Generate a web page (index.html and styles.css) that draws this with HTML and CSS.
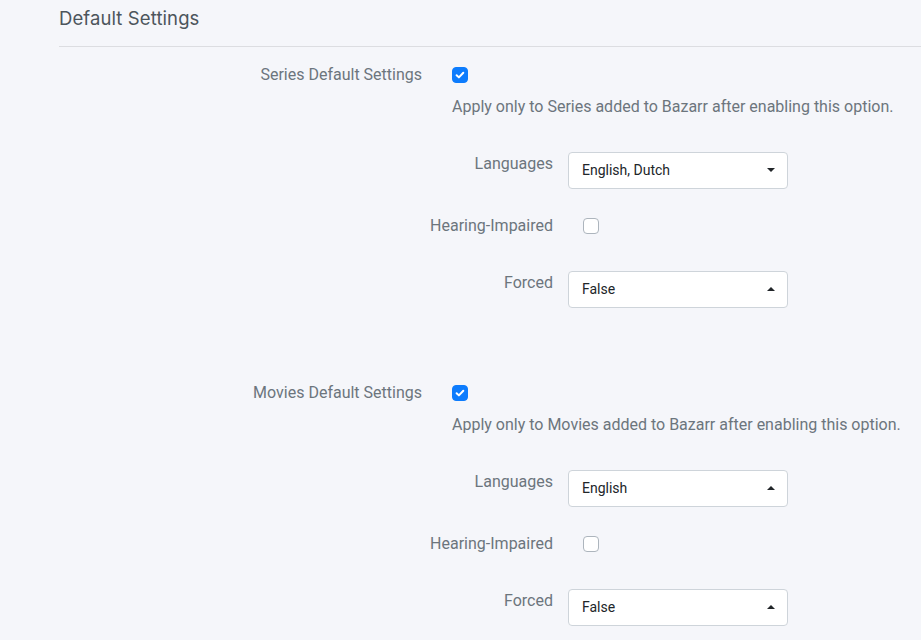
FILE: index.html
```html
<!DOCTYPE html>
<html>
<head>
<meta charset="utf-8">
<link rel="stylesheet" href="styles.css">
</head>
<body>
<div class="page">
  <h1 class="title">Default Settings</h1>
  <div class="rule"></div>

  <section class="group">
    <div class="row top">
      <div class="label main-label">Series Default Settings</div>
      <span class="check checked"><svg viewBox="0 0 16 16" width="16" height="16"><path d="M4.6 8.2l2.3 2.2 4.4-4.6" fill="none" stroke="#fff" stroke-width="2" stroke-linecap="round" stroke-linejoin="round"/></svg></span>
    </div>
    <div class="desc">Apply only to Series added to Bazarr after enabling this option.</div>
    <div class="row sub select-row">
      <div class="label sub-label">Languages</div>
      <div class="select"><span>English, Dutch</span><span class="caret down"></span></div>
    </div>
    <div class="row sub check-row">
      <div class="label sub-label">Hearing-Impaired</div>
      <span class="check sub-check"></span>
    </div>
    <div class="row sub select-row forced">
      <div class="label sub-label">Forced</div>
      <div class="select"><span>False</span><span class="caret up"></span></div>
    </div>
  </section>

  <section class="group second">
    <div class="row top">
      <div class="label main-label">Movies Default Settings</div>
      <span class="check checked"><svg viewBox="0 0 16 16" width="16" height="16"><path d="M4.6 8.2l2.3 2.2 4.4-4.6" fill="none" stroke="#fff" stroke-width="2" stroke-linecap="round" stroke-linejoin="round"/></svg></span>
    </div>
    <div class="desc">Apply only to Movies added to Bazarr after enabling this option.</div>
    <div class="row sub select-row">
      <div class="label sub-label">Languages</div>
      <div class="select"><span>English</span><span class="caret up"></span></div>
    </div>
    <div class="row sub check-row">
      <div class="label sub-label">Hearing-Impaired</div>
      <span class="check sub-check"></span>
    </div>
    <div class="row sub select-row forced">
      <div class="label sub-label">Forced</div>
      <div class="select"><span>False</span><span class="caret up"></span></div>
    </div>
  </section>
</div>
</body>
</html>
```

FILE: styles.css
```css
html, body {
  margin: 0;
  padding: 0;
  background: #f5f6fa;
  font-family: Roboto, "Liberation Sans", sans-serif;
  overflow: hidden;
}

.page {
  padding-left: 59px;
  width: 862px;
}

.title {
  margin: 0;
  height: 36px;
  line-height: 36px;
  font-family: Inter, "Open Sans", sans-serif;
  font-weight: 400;
  font-size: 18.5px;
  color: #4c555c;
  letter-spacing: 0.1px;
}

.rule {
  margin-top: 10px;
  height: 1px;
  background: #dcdde1;
  width: 880px;
}

.group {
  padding-top: 12px;
}

.group.second {
  padding-top: 69px;
}

.row {
  display: flex;
}

.row.top {
  height: 32px;
  align-items: center;
}

.label {
  font-size: 16px;
  line-height: 24px;
  color: #6c757d;
  text-align: right;
  flex: none;
}

.main-label {
  width: 363px;
  margin-right: 30px;
}

.sub-label {
  width: 494px;
  margin-right: 15px;
}

.desc {
  margin-top: 4px;
  margin-left: 393px;
  font-size: 16px;
  line-height: 24px;
  color: #6c757d;
}

.select-row {
  margin-top: 33px;
  align-items: flex-start;
}

.check-row {
  margin-top: 25px;
  height: 24px;
  align-items: center;
}

.check {
  display: block;
  width: 16px;
  height: 16px;
  box-sizing: border-box;
  border-radius: 4px;
  border: 1px solid #adb5bd;
  background: #fff;
  flex: none;
}

.check.checked {
  background: #0d7cfd;
  border-color: #0d7cfd;
}

.check.checked svg {
  display: block;
  margin: -1px;
}

.sub-check {
  margin-left: 15px;
}

.select {
  width: 220px;
  height: 37px;
  box-sizing: border-box;
  border: 1px solid #ced4da;
  border-radius: 4px;
  background: #fff;
  display: flex;
  align-items: center;
  justify-content: space-between;
  padding: 0 12px 2px 13px;
  font-size: 14px;
  color: #212529;
}

.caret {
  width: 0;
  height: 0;
  border-left: 4px solid transparent;
  border-right: 4px solid transparent;
}

.caret.down {
  border-top: 4px solid #212529;
}

.caret.up {
  border-bottom: 4px solid #212529;
}
```
